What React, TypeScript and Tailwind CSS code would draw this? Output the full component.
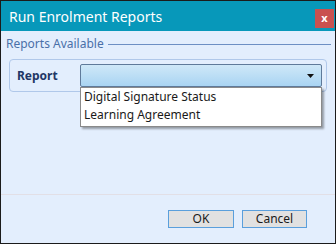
import React from "react";

const App: React.FC = () => {
  const items = ["Digital Signature Status", "Learning Agreement"];

  return (
    <div className="w-[336px] h-[244px] border border-[#1b1b1b] bg-[#e3eefd] flex flex-col font-['Noto_Sans',sans-serif]">
      {/* title bar */}
      <div className="h-[30px] bg-[#0798ba] flex items-start justify-between pl-[8px]">
        <span className="text-white text-[14px] leading-[31px]">Run Enrolment Reports</span>
        <div className="mt-[8px] mr-[1px] w-[19px] h-[19px] bg-[#c9514f] flex items-center justify-center text-white text-[11px] font-bold leading-none pb-[2px]">
          x
        </div>
      </div>

      {/* body */}
      <div className="flex-1 flex flex-col">
        <div className="flex items-center pl-[5px] pr-[4px] pt-[4px]">
          <span className="text-[12px] text-[#4a70a8] leading-[17px]">Reports Available</span>
          <div className="flex-1 h-px bg-[#6d8fc4] ml-[4px] mt-[1px]" />
        </div>

        <div className="mx-[8px] mt-[7px] h-[33px] rounded-[4px] border border-[#b0c8ea] flex items-center pl-[7px] pr-[4px]">
          <span className="w-[63px] text-[12px] font-bold text-[#1f3766]">Report</span>
          <div className="relative flex-1">
            <div className="h-[23px] rounded-[2px] border border-[#5f7a9a] bg-gradient-to-b from-[#cfe8f8] to-[#a9d4f2] flex items-center justify-end pr-[7px]">
              <svg width="7" height="4" viewBox="0 0 7 4">
                <path d="M0 0h7L3.5 4z" fill="#111" />
              </svg>
            </div>
            <div className="absolute left-0 right-0 top-[23px] bg-white border border-[#8a8a8a] shadow-[2px_2px_2px_rgba(0,0,0,0.35)] pb-[2px] z-10">
              {items.map((item) => (
                <div key={item} className="px-[3px] text-[12px] leading-[18px] text-[#1a1a1a]">
                  {item}
                </div>
              ))}
            </div>
          </div>
        </div>

        <div className="mt-[102px] h-px bg-[#e2dfe6]" />

        <div className="flex justify-end gap-[8px] pr-[28px] mt-[15px]">
          <button className="w-[66px] h-[18px] border border-[#5a9fdc] bg-[#e1e1e1] text-[12px] leading-none text-[#1a1a1a]">
            OK
          </button>
          <button className="w-[65px] h-[18px] border border-[#5a9fdc] bg-[#e1e1e1] text-[12px] leading-none text-[#1a1a1a]">
            Cancel
          </button>
        </div>
      </div>
    </div>
  );
};

export default App;
